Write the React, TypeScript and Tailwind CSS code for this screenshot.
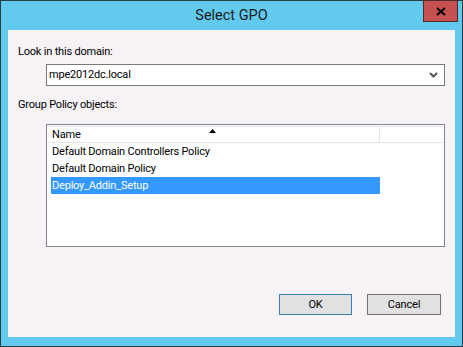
import React from "react"

const rows = [
  { name: "Default Domain Controllers Policy", selected: false },
  { name: "Default Domain Policy", selected: false },
  { name: "Deploy_Addin_Setup", selected: true },
]

export default function App() {
  return (
    <div className="w-[463px] h-[347px] bg-[#63caef] border border-[#2b3b40] flex flex-col" style={{ fontFamily: 'Roboto, "Noto Sans", sans-serif' }}>
      {/* Title bar */}
      <div className="h-[29px] shrink-0 relative flex items-center justify-center">
        <span className="text-[14.5px] text-[#1a1a1a] pt-[1px]">Select GPO</span>
        <button className="absolute top-[-1px] right-[4px] w-[35px] h-[22px] bg-[#c75050] border border-[#4a2a2a] flex items-center justify-center">
          <svg width="10" height="9" viewBox="0 0 10 9">
            <path d="M1 1 L9 8 M9 1 L1 8" stroke="#000" strokeWidth="2" />
          </svg>
        </button>
      </div>

      {/* Client */}
      <div className="mx-[7px] h-[307px] bg-[#f6f2f6] flex flex-col pt-[14px] text-[11px] tracking-[-0.2px] leading-[16px] text-black">
        <div className="pl-[10px]">Look in this domain:</div>
        <div className="ml-[38px] mt-[4px] w-[399px] h-[22px] bg-white border border-[#7a7a7a] flex items-center pl-[2px] pr-[6px]">
          <span className="flex-1">mpe2012dc.local</span>
          <svg width="9" height="6" viewBox="0 0 9 6">
            <path d="M1 1 L4.5 4.5 L8 1" stroke="#555" strokeWidth="2" fill="none" />
          </svg>
        </div>

        <div className="pl-[10px] mt-[11px]">Group Policy objects:</div>
        <div className="ml-[38px] mt-[11px] w-[399px] h-[123px] bg-white border border-[#82838f] p-[1px] flex flex-col">
          <div className="flex h-[17px] border-b border-[#e5e5e5]">
            <div className="w-[332px] border-t border-r border-[#e5e5e5] relative pl-[4px] flex items-center">
              Name
              <svg className="absolute top-[2px] left-[161px]" width="7" height="4" viewBox="0 0 7 4">
                <path d="M0 4 L3.5 0 L7 4 Z" fill="#000" />
              </svg>
            </div>
            <div className="flex-1 border-t border-[#e5e5e5]" />
          </div>
          <div className="flex flex-col pl-[3px]">
            {rows.map((r) => (
              <div
                key={r.name}
                className={
                  r.selected
                    ? "w-[329px] h-[17px] flex items-center pl-[1px] bg-[#3399ff] text-white"
                    : "w-[329px] h-[17px] flex items-center pl-[1px]"
                }
              >
                {r.name}
              </div>
            ))}
          </div>
        </div>

        <div className="flex justify-end gap-[15px] mt-[47px] pr-[14px]">
          <button className="w-[73px] h-[21px] bg-[#e1e1e1] border border-[#3c7fb1]">OK</button>
          <button className="w-[74px] h-[21px] bg-[#e1e1e1] border border-[#707070]">Cancel</button>
        </div>
      </div>
    </div>
  )
}
